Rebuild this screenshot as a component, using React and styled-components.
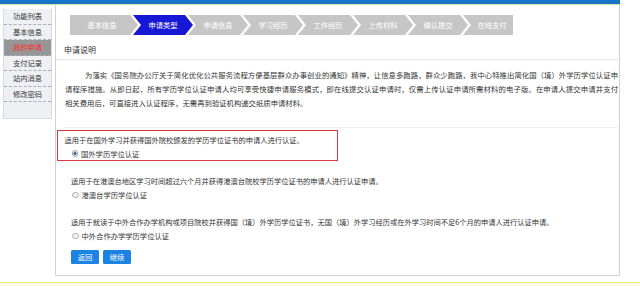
import React from "react";
import styled, { createGlobalStyle, css } from "styled-components";

const Global = createGlobalStyle`
  html, body { margin: 0; padding: 0; background: #fff; }
  body {
    width: 640px; height: 286px; overflow: hidden;
    font-family: "Noto Sans CJK SC", "Liberation Sans", sans-serif;
    color: #333;
  }
  * { box-sizing: border-box; }
`;

const Page = styled.div`
  width: 640px;
  height: 286px;
  display: flex;
  flex-direction: column;
`;

const Header = styled.div`
  width: 620px;
  height: 5px;
  background: #1874c8;
  border-bottom: 1px solid #cfe39a;
  flex: none;
`;

const Body = styled.div`
  display: flex;
  align-items: flex-start;
  flex: none;
`;

const Sidebar = styled.ul`
  list-style: none;
  margin: 4px 0 0 3px;
  padding: 0 0 16px;
  width: 49px;
  background: #eef0f4;
  border: 1px solid #d6dae2;
  border-top: none;
  flex: none;
`;

const SideItem = styled.li`
  height: 15.5px;
  line-height: 14.5px;
  border-bottom: 1px dashed #a9adb5;
  text-align: center;
  font-size: 7.3px;
  color: #333;
  ${(p) =>
    p.$active &&
    css`
      background: #969696;
      color: #ff2d2d;
    `}
`;

const Main = styled.div`
  margin-left: 3px;
  width: 565px;
  height: 271px;
  border: 1px solid #d2d2d2;
  border-top: none;
  padding: 0 1px 0 8px;
  display: flex;
  flex-direction: column;
  flex: none;
`;

const Steps = styled.div`
  display: flex;
  margin: 10px 0 0 6px;
  height: 20px;
`;

const Step = styled.div`
  flex: none;
  height: 20px;
  width: ${(p) => p.$w}px;
  margin-left: ${(p) => (p.$first ? 0 : -5)}px;
  padding-left: ${(p) => (p.$first ? 4 : 8)}px;
  padding-right: ${(p) => (p.$last ? 0 : 8)}px;
  background: ${(p) => (p.$active ? "#1717d6" : "#c6c6c6")};
  color: #fff;
  font-size: 7.3px;
  display: flex;
  align-items: center;
  justify-content: center;
  white-space: nowrap;
  clip-path: ${(p) =>
    p.$first
      ? "polygon(0 0, calc(100% - 8px) 0, 100% 50%, calc(100% - 8px) 100%, 0 100%)"
      : p.$last
      ? "polygon(0 0, 100% 0, 100% 100%, 0 100%, 8px 50%)"
      : "polygon(0 0, calc(100% - 8px) 0, 100% 50%, calc(100% - 8px) 100%, 0 100%, 8px 50%)"};
`;

const Heading = styled.div`
  margin: 1px -1px 0 -8px;
  padding: 8px 8px 3px;
  line-height: 12px;
  font-size: 8px;
  color: #333;
  border-bottom: 1px solid #e6e6e6;
`;

const Paragraph = styled.div`
  margin-top: 8px;
  padding-bottom: 17px;
  width: 554px;
  border-bottom: 1px solid #efefef;
  font-size: 7.35px;
  line-height: 14px;
`;

const ParaLine = styled.div`
  white-space: nowrap;
  padding-left: ${(p) => (p.$indent ? 21 : 1)}px;
  text-align: ${(p) => (p.$justify ? "justify" : "left")};
  text-align-last: ${(p) => (p.$justify ? "justify" : "auto")};
`;

const HighlightBox = styled.div`
  margin: 2px 0 0 -7px;
  width: 281px;
  border: 1.5px solid #dc3a42;
  padding: 2px 0 0 6.5px;
`;

const Section = styled.div`
  margin-top: 13px;
  padding-left: 7px;
`;

const Desc = styled.div`
  font-size: 7.25px;
  line-height: 14px;
  white-space: nowrap;
`;

const Choice = styled.label`
  display: flex;
  align-items: center;
  gap: 3px;
  height: ${(p) => (p.$tight ? 13 : 14)}px;
  padding-left: ${(p) => p.$offset || 0}px;
  font-size: 7.3px;
  color: #333;
`;

const Radio = styled.span`
  width: 6.5px;
  height: 6.5px;
  border-radius: 50%;
  border: 1px solid #b4b4b4;
  background: #f1f1f1;
  flex: none;
  ${(p) =>
    p.$checked &&
    css`
      background: radial-gradient(circle, #4d6690 0 1.3px, #e3e8ef 1.8px);
      border-color: #9aa6b8;
    `}
`;

const Buttons = styled.div`
  display: flex;
  gap: 4px;
  margin: 7px 0 0 7px;
`;

const Button = styled.button`
  height: 14px;
  width: 28px;
  padding: 0;
  border: none;
  border-radius: 1.5px;
  background: #1b83e2;
  color: #fff;
  font-family: inherit;
  font-size: 7.3px;
  line-height: 14px;
`;

const Footer = styled.div`
  margin-top: 6px;
  flex: 1;
  border-top: 1px solid #efe37a;
  background: #fffdea;
`;

const menu = ["功能列表", "基本信息", "我的申请", "支付记录", "站内消息", "修改密码"];
const steps = ["基本信息", "申请类型", "申请信息", "学习经历", "工作经历", "上传材料", "确认提交", "在线支付"];

export default function App() {
  return (
    <Page>
      <Global />
      <Header />
      <Body>
        <Sidebar>
          {menu.map((m) => (
            <SideItem key={m} $active={m === "我的申请"}>
              {m}
            </SideItem>
          ))}
        </Sidebar>
        <Main>
          <Steps>
            {steps.map((s, i) => (
              <Step
                key={s}
                $first={i === 0}
                $last={i === steps.length - 1}
                $active={i === 1}
                $w={i === 0 ? 68 : i === steps.length - 1 ? 50 : 60}
              >
                {s}
              </Step>
            ))}
          </Steps>
          <Heading>申请说明</Heading>
          <Paragraph>
            <ParaLine $indent $justify>
              为落实《国务院办公厅关于简化优化公共服务流程方便基层群众办事创业的通知》精神，让信息多跑路，群众少跑路，我中心特推出简化国（境）外学历学位认证申
            </ParaLine>
            <ParaLine $justify>
              请程序措施。从即日起，所有学历学位认证申请人均可享受快捷申请服务模式，即在线提交认证申请时，仅需上传认证申请所需材料的电子版。在申请人提交申请并支付
            </ParaLine>
            <ParaLine>相关费用后，可直接进入认证程序，无需再到验证机构递交纸质申请材料。</ParaLine>
          </Paragraph>
          <HighlightBox>
            <Desc>适用于在国外学习并获得国外院校颁发的学历学位证书的申请人进行认证。</Desc>
            <Choice $tight $offset={7}>
              <Radio $checked />
              国外学历学位认证
            </Choice>
          </HighlightBox>
          <Section>
            <Desc>适用于在港澳台地区学习时间超过六个月并获得港澳台院校学历学位证书的申请人进行认证申请。</Desc>
            <Choice $offset={1}>
              <Radio />
              港澳台学历学位认证
            </Choice>
          </Section>
          <Section>
            <Desc>
              适用于就读于中外合作办学机构或项目院校并获得国（境）外学历学位证书，无国（境）外学习经历或在外学习时间不足6个月的申请人进行认证申请。
            </Desc>
            <Choice $offset={1}>
              <Radio />
              中外合作办学学历学位认证
            </Choice>
          </Section>
          <Buttons>
            <Button>返回</Button>
            <Button>继续</Button>
          </Buttons>
        </Main>
      </Body>
      <Footer />
    </Page>
  );
}
